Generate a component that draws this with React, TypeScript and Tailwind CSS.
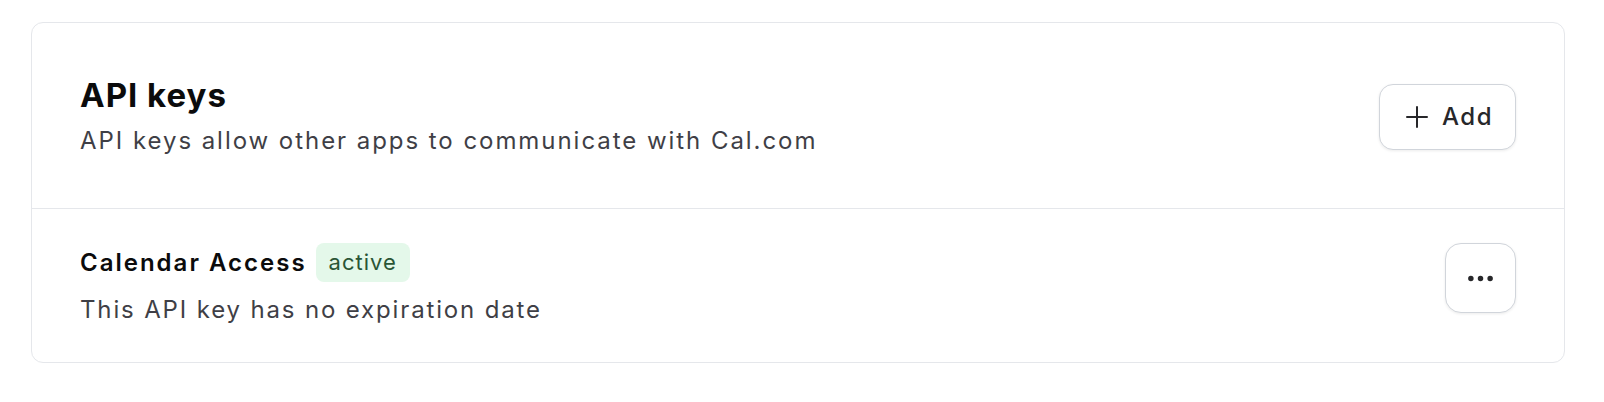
import React from 'react';
import { Ellipsis } from 'lucide-react';

const PlusIcon: React.FC = () => (
  <svg width="22" height="22" viewBox="0 0 22 22" fill="none" stroke="currentColor" strokeWidth="2" strokeLinecap="round">
    <path d="M11 1v20M1 11h20" />
  </svg>
);

const App: React.FC = () => {
  return (
    <div className="min-h-screen bg-white pl-[31px] pt-[22px] font-['Inter',sans-serif]">
      <div className="w-[1534px] rounded-[12px] border border-[#e5e7eb] bg-white">
        {/* Header */}
        <div className="flex items-center justify-between border-b border-[#e5e7eb] pl-[48px] pr-[48px] pt-[52px] pb-[51px]">
          <div>
            <h2 className="text-[33px] leading-[40px] font-bold tracking-[1px] text-[#0b0b0c]">API keys</h2>
            <p className="mt-[10px] text-[24px] leading-[32px] tracking-[1.95px] text-[#3f3f46]">
              API keys allow other apps to communicate with Cal.com
            </p>
          </div>
          <button className="mt-[2px] flex h-[66px] items-center gap-[14px] rounded-[14px] border border-[#d1d5db] bg-white pl-[26px] pr-[22px] text-[24px] font-medium tracking-[1.5px] text-[#27272a] shadow-[0_1px_3px_rgba(0,0,0,0.08)]">
            <PlusIcon />
            <span>Add</span>
          </button>
        </div>

        {/* Key row */}
        <div className="flex items-start justify-between pl-[48px] pr-[48px] pt-[34px] pb-[36px]">
          <div>
            <div className="flex items-center gap-[9px]">
              <span className="text-[24px] leading-[32px] font-semibold tracking-[2px] text-[#0b0b0c]">Calendar Access</span>
              <span className="flex h-[39px] items-center rounded-[8px] bg-[#e4f8ea] px-[13px] text-[22px] tracking-[1px] text-[#2a5535]">
                active
              </span>
            </div>
            <p className="mt-[12px] text-[24px] leading-[32px] tracking-[1.85px] text-[#3f3f46]">This API key has no expiration date</p>
          </div>
          <button className="flex h-[70px] w-[71px] items-center justify-center rounded-[16px] border border-[#d1d5db] bg-white text-[#27272a] shadow-[0_1px_3px_rgba(0,0,0,0.08)]">
            <Ellipsis size={33} strokeWidth={2} />
          </button>
        </div>
      </div>
    </div>
  );
};

export default App;
